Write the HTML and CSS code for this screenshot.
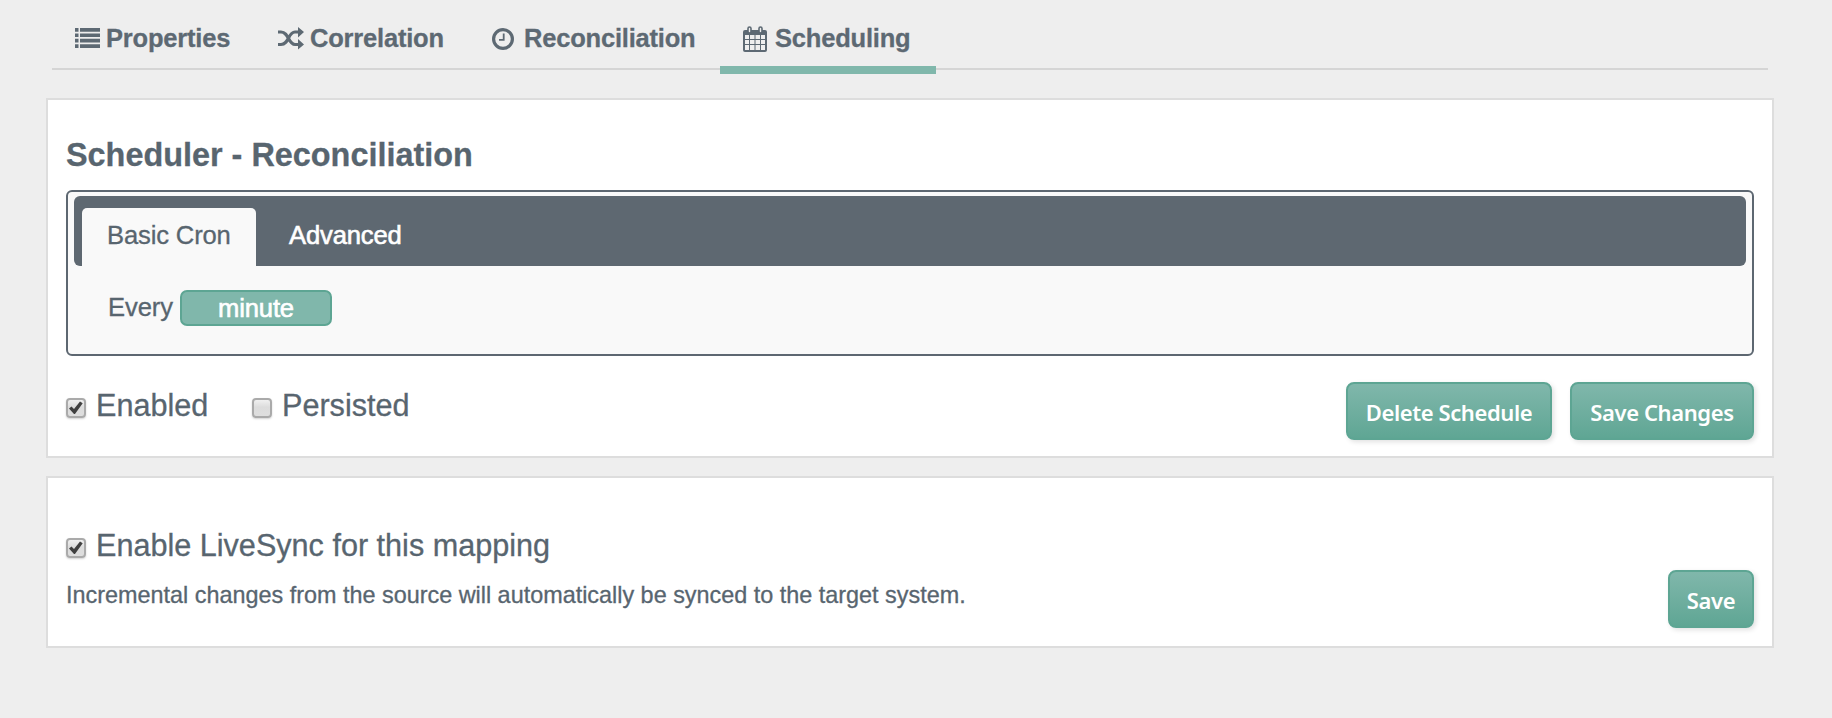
FILE: index.html
```html
<!DOCTYPE html>
<html lang="en">
<head>
<meta charset="utf-8">
<title>Scheduling</title>
<link rel="stylesheet" href="styles.css">
</head>
<body>
<nav class="nav">
  <a class="nav-item properties"><svg class="icon" width="26" height="22" viewBox="0 0 26 22"><path d="M0 1h3.500v3.700H0zM5 1h20v3.700H5zM0 6.400h3.500v3.700H0zM5 6.400h20v3.700H5zM0 11.800h3.500v3.700H0zM5 11.800h20v3.700H5zM0 17.200h3.500v3.800H0zM5 17.200h20v3.800H5z"/></svg><span>Properties</span></a>
  <a class="nav-item correlation"><svg class="icon" width="26" height="24" viewBox="0 0 26 24"><path class="line" d="M0 6h3c8 0 7 12.500 14 12.500h5M0 18.500h3c8 0 7-12.500 14-12.500h5"/><path d="M20 1l6 5-6 5.500zM20 13l6 5.500-6 5z"/></svg><span>Correlation</span></a>
  <a class="nav-item reconciliation"><svg class="icon" width="22" height="22" viewBox="0 0 22 22"><circle class="line" cx="11" cy="11" r="9.400"/><path class="hand" d="M11.700 5.500v6.400H7"/></svg><span>Reconciliation</span></a>
  <a class="nav-item scheduling active"><svg class="icon" width="24" height="26" viewBox="0 0 24 26"><path fill-rule="evenodd" d="M2 4h20q2 0 2 2v18q0 2-2 2H2q-2 0-2-2V6q0-2 2-2zM2 9v4h4V9zM7 9v4h4.500V9zM12.500 9v4H17V9zM18 9v4h4V9zM2 14v4h4v-4zM7 14v4h4.500v-4zM12.500 14v4H17v-4zM18 14v4h4v-4zM2 19v5h4v-5zM7 19v5h4.500v-5zM12.500 19v5H17v-5zM18 19v5h4v-5z"/><rect class="ring" x="5" y="1" width="3" height="6" rx="1.500"/><rect class="ring" x="16" y="1" width="3" height="6" rx="1.500"/></svg><span>Scheduling</span></a>
</nav>
<main>
  <section class="panel scheduler">
    <h1>Scheduler - Reconciliation</h1>
    <div class="cron">
      <div class="tabs"><a class="tab selected">Basic Cron</a><a class="tab">Advanced</a></div>
      <div class="cron-body"><span class="every">Every</span><button class="period">minute</button></div>
    </div>
    <div class="row">
      <label class="check first"><i class="box"><svg width="20" height="20" viewBox="0 0 20 20"><path d="M3 10.500l2.500-2 2.500 2.500 6-7.500 2.700 1.700L9 16H8z"/></svg></i><span>Enabled</span></label>
      <label class="check"><i class="box"></i><span>Persisted</span></label>
      <div class="actions"><button class="btn delete">Delete Schedule</button><button class="btn changes">Save Changes</button></div>
    </div>
  </section>
  <section class="panel livesync">
    <div>
      <label class="check"><i class="box"><svg width="20" height="20" viewBox="0 0 20 20"><path d="M3 10.500l2.500-2 2.500 2.500 6-7.500 2.700 1.700L9 16H8z"/></svg></i><span>Enable LiveSync for this mapping</span></label>
      <p>Incremental changes from the source will automatically be synced to the target system.</p>
    </div>
    <button class="btn save">Save</button>
  </section>
</main>
</body>
</html>
```
FILE: styles.css
```css
* { box-sizing: border-box; }
body { margin: 0; height: 718px; overflow: hidden; background: #eee; color: #58656f; font-family: "Liberation Sans", Arial, sans-serif; -webkit-text-stroke: .3px; }
button { font-family: inherit; margin: 0; padding: 0; }
.nav { display: flex; height: 70px; margin: 0 64px 0 52px; border-bottom: 2px solid #d5d5d5; color: #5d6973; font-size: 25.500px; font-weight: bold; letter-spacing: -.2px; line-height: 30px; white-space: nowrap; }
.nav-item { display: flex; height: 74px; padding-top: 23px; }
.icon { flex: none; fill: #5d6973; overflow: visible; }
.line, .hand { fill: none; stroke: #5d6973; stroke-width: 3.200; }
.hand { stroke-width: 1.800; }
.ring { fill: #eee; stroke: #5d6973; stroke-width: 1.600; }
.properties { width: 203px; padding-left: 23px; }
.properties .icon { margin: 4px 5px 0 0; }
.correlation { width: 213px; padding-left: 23px; }
.correlation .icon { margin: 3px 6px 0 0; }
.reconciliation { width: 252px; padding-left: 24px; }
.reconciliation .icon { margin: 5px 10px 0 0; }
.scheduling { width: 216px; padding-left: 23px; }
.scheduling .icon { margin: 3px 8px 0 0; }
.active { border-bottom: 8px solid #80b7ab; }
main { display: flex; flex-direction: column; gap: 18px; margin: 28px 58px 0 46px; }
.panel { background: #fff; border: 2px solid #ddd; padding: 0 18px; }
.scheduler { height: 360px; }
h1 { margin: 0; padding-top: 37px; height: 90px; font-size: 32.400px; line-height: 37px; }
.cron { height: 166px; padding: 4px 6px; border: 2px solid #5d6771; border-radius: 6px; background: #f9f9f9; font-size: 25.600px; }
.tabs { display: flex; height: 70px; padding: 12px 8px 0; border-radius: 6px; background: #5e6871; line-height: 30px; white-space: nowrap; }
.tab { padding: 12px 25px 0; color: #fff; letter-spacing: -.15px; -webkit-text-stroke: .6px; }
.tab.selected { width: 174px; margin-right: 8px; background: #f9f9f9; color: #58656f; border-radius: 5px 5px 0 0; -webkit-text-stroke: .3px; }
.cron-body { display: flex; padding: 24px 0 0 34px; line-height: 35px; }
.every { width: 72px; letter-spacing: -.1px; }
.period { width: 152px; height: 36px; border: 2px solid #5da593; border-radius: 7px; background: #80b7ab; color: #fff; font-size: 25.600px; letter-spacing: -.15px; line-height: 28px; -webkit-text-stroke: .6px; }
.row { display: flex; }
.check { display: flex; height: 36px; font-size: 30.600px; line-height: 38px; white-space: nowrap; }
.row .check { margin-top: 30px; }
.row .first { width: 186px; }
.box { flex: none; width: 20px; height: 20px; margin: 12px 10px 0 0; border: 2px solid #aaa; border-radius: 4px; background: linear-gradient(#f0f0f0, #dcdcdc 45%, #dedede); box-shadow: 0 1px 2px rgba(0,0,0,.18); }
.box svg { display: block; margin: -2px; fill: #404040; }
.actions { display: flex; gap: 18px; margin: 26px 0 0 auto; }
.btn { height: 58px; padding-top: 1px; border: 2px solid #5da593; border-radius: 8px; background: linear-gradient(#80b7ab, #5fa694); box-shadow: 2px 2px 5px rgba(0,0,0,.12); color: #fff; font: 600 22px/28px "Noto Sans", sans-serif; letter-spacing: -.4px; white-space: nowrap; -webkit-text-stroke: 0; }
.delete { width: 206px; }
.changes { width: 184px; }
.livesync { display: flex; justify-content: space-between; height: 172px; }
.livesync .check { margin-top: 48px; }
p { margin: 19px 0 0; font-size: 23.400px; line-height: 28px; white-space: nowrap; }
.save { width: 86px; margin-top: 92px; }
```
